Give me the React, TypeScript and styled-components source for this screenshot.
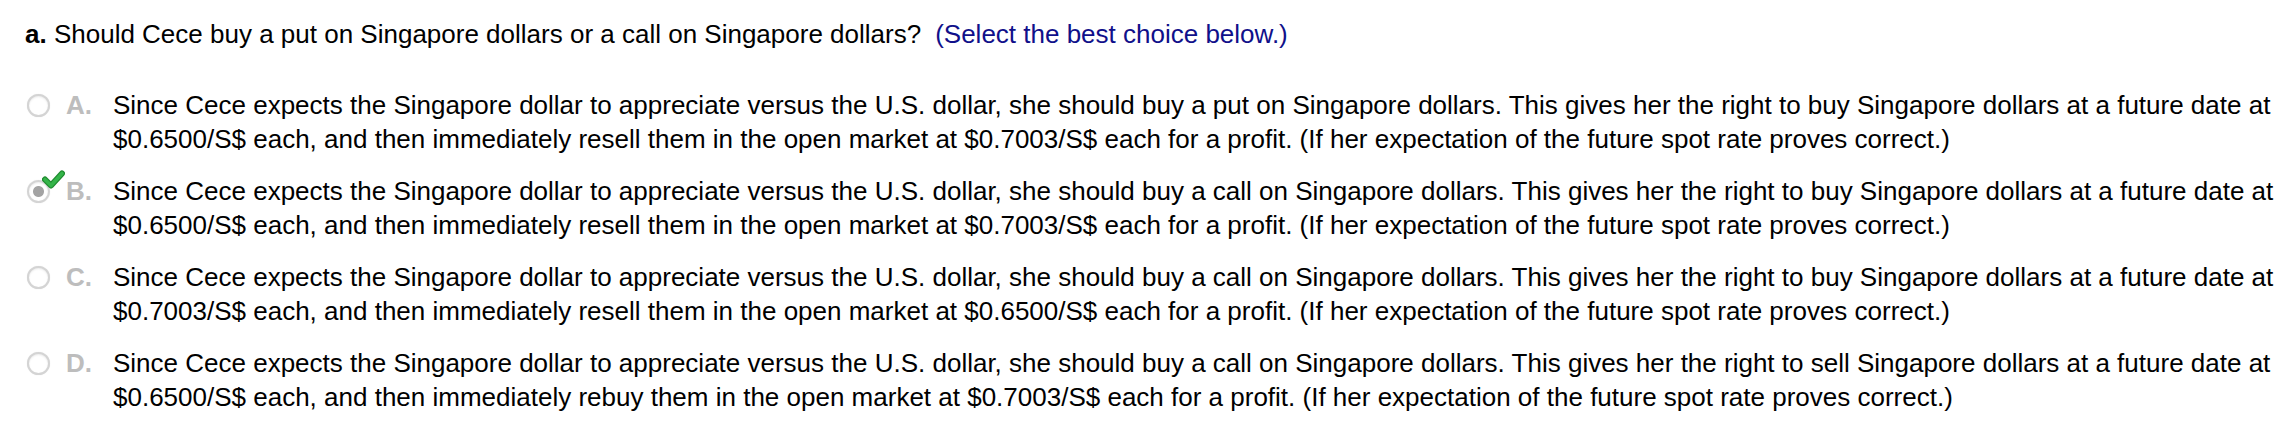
import React from "react";
import styled, { createGlobalStyle } from "styled-components";

const Global = createGlobalStyle`
  html, body { margin: 0; padding: 0; background: #ffffff; }
  body { font-family: "Liberation Sans", Arial, sans-serif; color: #000; }
`;

const Page = styled.div`
  padding: 17px 0 0 25px;
  font-size: 26px;
  line-height: 34px;
`;

const Question = styled.div`
  white-space: nowrap;
`;

const Part = styled.b`
  font-weight: bold;
`;

const Hint = styled.span`
  color: #10108a;
  margin-left: 14px;
`;

const List = styled.div`
  display: flex;
  flex-direction: column;
  gap: 18px;
  margin-top: 37px;
`;

const Row = styled.div`
  display: grid;
  grid-template-columns: 41px 47px 1fr;
  align-items: start;
`;

const RadioWrap = styled.div`
  position: relative;
  height: 34px;
  display: flex;
  align-items: center;
`;

const Circle = styled.span<{ $checked?: boolean }>`
  box-sizing: border-box;
  width: 23px;
  height: 23px;
  margin-left: 2px;
  border-radius: 50%;
  border: 2px solid #d4d4d4;
  box-shadow: 0 0 1px #e0e0e0, inset 0 1px 2px #ececec;
  background: ${(p) =>
    p.$checked
      ? "radial-gradient(circle, #a3a3a3 0 5px, #ffffff 6px)"
      : "#ffffff"};
`;

const Check = styled.svg`
  position: absolute;
  left: 17px;
  top: -4px;
  width: 23px;
  height: 19px;
`;

const Letter = styled.span`
  font-weight: bold;
  color: #bdbdbd;
`;

const Text = styled.div`
  white-space: nowrap;
`;

type Opt = { letter: string; lines: [string, string]; checked?: boolean };

const options: Opt[] = [
  {
    letter: "A.",
    lines: [
      "Since Cece expects the Singapore dollar to appreciate versus the U.S. dollar, she should buy a put on Singapore dollars. This gives her the right to buy Singapore dollars at a future date at",
      "$0.6500/S$ each, and then immediately resell them in the open market at $0.7003/S$ each for a profit. (If her expectation of the future spot rate proves correct.)",
    ],
  },
  {
    letter: "B.",
    checked: true,
    lines: [
      "Since Cece expects the Singapore dollar to appreciate versus the U.S. dollar, she should buy a call on Singapore dollars. This gives her the right to buy Singapore dollars at a future date at",
      "$0.6500/S$ each, and then immediately resell them in the open market at $0.7003/S$ each for a profit. (If her expectation of the future spot rate proves correct.)",
    ],
  },
  {
    letter: "C.",
    lines: [
      "Since Cece expects the Singapore dollar to appreciate versus the U.S. dollar, she should buy a call on Singapore dollars. This gives her the right to buy Singapore dollars at a future date at",
      "$0.7003/S$ each, and then immediately resell them in the open market at $0.6500/S$ each for a profit. (If her expectation of the future spot rate proves correct.)",
    ],
  },
  {
    letter: "D.",
    lines: [
      "Since Cece expects the Singapore dollar to appreciate versus the U.S. dollar, she should buy a call on Singapore dollars. This gives her the right to sell Singapore dollars at a future date at",
      "$0.6500/S$ each, and then immediately rebuy them in the open market at $0.7003/S$ each for a profit. (If her expectation of the future spot rate proves correct.)",
    ],
  },
];

export default function App() {
  return (
    <>
      <Global />
      <Page>
        <Question>
          <Part>a.</Part> Should Cece buy a put on Singapore dollars or a call on
          Singapore dollars?
          <Hint>(Select the best choice below.)</Hint>
        </Question>
        <List>
          {options.map((o) => (
            <Row key={o.letter}>
              <RadioWrap>
                <Circle $checked={o.checked} />
                {o.checked && (
                  <Check viewBox="0 0 23 19">
                    <path
                      d="M3 9.5 L9 15.5 L20 3.5"
                      fill="none"
                      stroke="#1e8a2e"
                      strokeWidth="6"
                      strokeLinecap="round"
                      strokeLinejoin="round"
                    />
                    <path
                      d="M3 9.5 L9 15.5 L20 3.5"
                      fill="none"
                      stroke="#34b449"
                      strokeWidth="3.6"
                      strokeLinecap="round"
                      strokeLinejoin="round"
                    />
                  </Check>
                )}
              </RadioWrap>
              <Letter>{o.letter}</Letter>
              <Text>
                {o.lines[0]}
                <br />
                {o.lines[1]}
              </Text>
            </Row>
          ))}
        </List>
      </Page>
    </>
  );
}
